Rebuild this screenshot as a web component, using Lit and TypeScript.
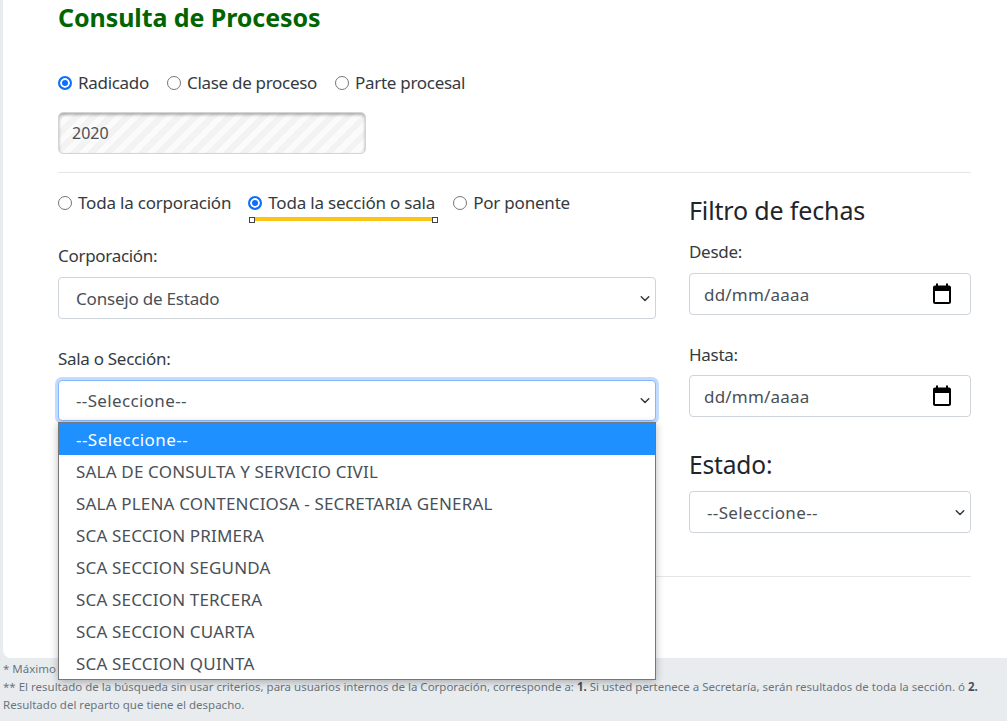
import { LitElement, html, css, svg } from "lit";
import { customElement } from "lit/decorators.js";

const calendar = svg`<svg class="cal" viewBox="0 0 24 24" width="24" height="24" aria-hidden="true"><path fill="#000" d="M19 3.500h-1V1.600h-2v1.900H8V1.600H6v1.900H5c-1.100 0-2 .9-2 2V20c0 1.100.9 2 2 2h14c1.100 0 2-.9 2-2V5.500c0-1.100-.9-2-2-2zm0 16.500H5V9h14v11z"/></svg>`;
const chevron = svg`<svg class="chev" viewBox="0 0 16 16" width="16" height="12" aria-hidden="true"><path fill="none" stroke="#343a40" stroke-linecap="round" stroke-linejoin="round" stroke-width="2" d="M3 5l5 5 5-5"/></svg>`;

const options = [
  "--Seleccione--",
  "SALA DE CONSULTA Y SERVICIO CIVIL",
  "SALA PLENA CONTENCIOSA - SECRETARIA GENERAL",
  "SCA SECCION PRIMERA",
  "SCA SECCION SEGUNDA",
  "SCA SECCION TERCERA",
  "SCA SECCION CUARTA",
  "SCA SECCION QUINTA",
];

@customElement("app-root")
export class AppRoot extends LitElement {
  static styles = css`
    :host { display: block; height: 721px; overflow: hidden; background: #e9ecef; color: #212529;
      font-family: "Noto Sans", "Open Sans", sans-serif; font-size: 17px; position: relative; }
    * { box-sizing: border-box; }
    .card { margin-left: 3px; height: 658px; background: #fff; border-bottom-left-radius: 8px;
      padding: 0 36px 0 55px; }
    h1 { margin: 0; height: 37px; padding-top: 2px; font-size: 25px; line-height: 30px; font-weight: 700; color: #006400; letter-spacing: -0.08px; }
    .radios { display: flex; align-items: center; height: 24px; }
    .radios.top { margin-top: 34px; gap: 18px; }
    .radios.top .r { letter-spacing: -0.3px; }
    .radios.second { gap: 17px; margin-top: -1px; }
    .r { display: inline-flex; align-items: center; gap: 6px; line-height: 24px; white-space: nowrap; letter-spacing: -0.2px; color: #343a40; }
    .dot { width: 14px; height: 14px; border-radius: 50%; border: 1px solid #767676; background: #fff; flex: none; }
    .dot.on { border: 2px solid #0d6efd; background: #0d6efd; box-shadow: inset 0 0 0 2px #fff; }
    .marked { position: relative; margin-right: 1px; }
    .mark { position: absolute; left: 2px; right: -2px; top: 26px; height: 4px; background: #fdc513; }
    .mark::before, .mark::after { content: ""; position: absolute; top: 0; width: 4px; height: 4px; background: #fff; border: 1px solid #444; }
    .mark::before { left: -1px; }
    .mark::after { right: -1px; }
    .year { margin-top: 17px; width: 308px; height: 42px; border-radius: 5px; border: 1px solid #d4d4d4;
      padding: 0 13px; display: flex; align-items: center; color: #495057; font-size: 16px;
      background: repeating-linear-gradient(135deg, #f3f3f3 0 6px, #fbfbfb 6px 12px);
      box-shadow: inset 0 2px 3px rgba(0,0,0,.3); }
    hr { border: 0; border-top: 1px solid #e4e6e8; margin: 0; }
    hr.a { margin-top: 18px; margin-bottom: 19px; }
    .cols { display: flex; gap: 33px; }
    .left { width: 598px; flex: none; position: relative; }
    .right { width: 282px; flex: none; }
    .field-label { line-height: 24px; height: 24px; color: #343a40; letter-spacing: -0.3px; }
    .left .l1 { margin-top: 29px; }
    .left .l2 { margin-top: 28px; }
    .box { height: 42px; margin-top: 9px; border: 1px solid #ced4da; border-radius: 4px; background: #fff;
      display: flex; align-items: center; justify-content: space-between; padding: 0 2px 0 17px; color: #495057;
      letter-spacing: -0.2px; }
    .box .ph { letter-spacing: 0.35px; }
    .box .date { letter-spacing: 0.2px; }
    .left .l2 + .box { margin-top: 9px; height: 41px; border-color: #86b7fe; box-shadow: 0 0 0 3px #c2dbfe; }
    .right .box { padding: 0 16px 0 14px; }
    .right .sel { padding: 0 2px 0 17px; }
    .chev { display: block; margin-top: 1px; }
    .cal { display: block; }
    .rt { font-size: 25px; line-height: 30px; height: 30px; font-weight: 400; margin: 0; letter-spacing: -0.15px; color: #212529; }
    .right .rt.f { margin-top: 3px; }
    .right .d1 { margin-top: 15px; }
    .right .d2 { margin-top: 28px; }
    .right .d2 + .box { margin-top: 8px; }
    .right .rt.e { margin-top: 33px; font-size: 24.5px; }
    .right .rt.e + .box { margin-top: 11px; }
    hr.b { margin-top: 43px; }
    .list { position: absolute; left: 0; top: 230px; width: 598px; background: #fff; border: 1px solid #767676;
      box-shadow: 0 2px 8px rgba(0,0,0,.28); z-index: 2; }
    .opt { height: 32px; line-height: 33px; padding-left: 17px; color: #495057; letter-spacing: 0.18px; white-space: nowrap; }
    .opt.sel { background: #1e90ff; color: #fff; letter-spacing: 0.45px; }
    .foot { padding: 2px 3px 0; font-size: 11.5px; line-height: 18px; color: #6c757d; white-space: nowrap; }
    .foot b { font-weight: 700; color: #495057; }
  `;

  private radio(label: string, on = false, marked = false) {
    return html`<span class="r ${marked ? "marked" : ""}"><span class="dot ${on ? "on" : ""}"></span>${label}${marked ? html`<span class="mark"></span>` : ""}</span>`;
  }

  render() {
    return html`
      <div class="card">
        <h1>Consulta de Procesos</h1>
        <div class="radios top">
          ${this.radio("Radicado", true)}${this.radio("Clase de proceso")}${this.radio("Parte procesal")}
        </div>
        <div class="year">2020</div>
        <hr class="a" />
        <div class="cols">
          <div class="left">
            <div class="radios second">
              ${this.radio("Toda la corporación")}${this.radio("Toda la sección o sala", true, true)}${this.radio("Por ponente")}
            </div>
            <div class="field-label l1">Corporación:</div>
            <div class="box"><span>Consejo de Estado</span>${chevron}</div>
            <div class="field-label l2">Sala o Sección:</div>
            <div class="box"><span class="ph">--Seleccione--</span>${chevron}</div>
            <div class="list">
              ${options.map((o, i) => html`<div class="opt ${i === 0 ? "sel" : ""}">${o}</div>`)}
            </div>
          </div>
          <div class="right">
            <h3 class="rt f">Filtro de fechas</h3>
            <div class="field-label d1">Desde:</div>
            <div class="box"><span class="date">dd/mm/aaaa</span>${calendar}</div>
            <div class="field-label d2">Hasta:</div>
            <div class="box"><span class="date">dd/mm/aaaa</span>${calendar}</div>
            <h3 class="rt e">Estado:</h3>
            <div class="box sel"><span class="ph">--Seleccione--</span>${chevron}</div>
          </div>
        </div>
        <hr class="b" />
      </div>
      <div class="foot">
        <div>* Máximo</div>
        <div>** El resultado de la búsqueda sin usar criterios, para usuarios internos de la Corporación, corresponde a: <b>1.</b> Si usted pertenece a Secretaría, serán resultados de toda la sección. ó <b>2.</b></div>
        <div>Resultado del reparto que tiene el despacho.</div>
      </div>
    `;
  }
}
